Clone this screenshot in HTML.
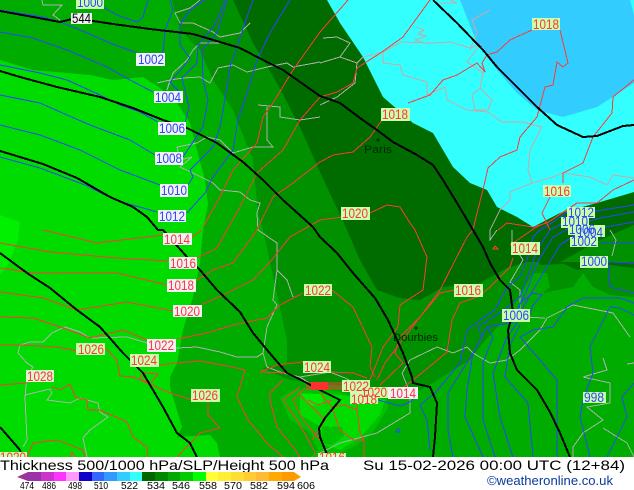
<!DOCTYPE html>
<html><head><meta charset="utf-8"><style>
html,body{margin:0;padding:0;background:#fff;width:634px;height:490px;overflow:hidden}
svg{display:block}
text{font-family:"Liberation Sans",sans-serif}
.b polyline{stroke:#000;stroke-width:2;fill:none}
.u polyline{stroke:#2a44ff;stroke-width:1;fill:none}
.r polyline{stroke:#ff3838;stroke-width:1;fill:none}
.g polyline{stroke:#b0b0b0;stroke-width:1;fill:none}
.p polyline{stroke:#c8a8a8;stroke-width:1;fill:none}
.t text{font-size:14px;text-anchor:middle}
</style></head><body>
<svg width="634" height="490" viewBox="0 0 634 490" xmlns="http://www.w3.org/2000/svg">
<defs><clipPath id="m"><rect width="634" height="457"/></clipPath></defs>
<rect width="634" height="490" fill="#fff"/>
<g clip-path="url(#m)">
<rect width="634" height="457" fill="#00dc00"/>
<polygon fill="#00f000" points="0,215 20,222 18,240 8,265 0,275"/>
<polygon fill="#00ac00" points="0,0 0,60 33,70 67,73 90,75 113,80 143,77 160,88 177,103 190,123 197,150 205,180 208,205 203,230 200,263 193,297 183,330 177,363 170,377 170,387 182,427 177,437 210,435 217,443 220,457 634,457 634,0"/>
<polygon fill="#009000" points="172,0 180,30 200,50 213,80 233,110 253,160 258,213 263,230 287,340 287,363 262,368 290,380 340,386 383,387 420,390 433,383 453,370 470,360 483,343 507,317 533,273 547,273 550,287 543,293 573,287 583,273 593,287 610,295 634,297 634,0"/>
<polygon fill="#006c00" points="233,0 253,43 277,83 300,127 320,172 347,230 360,260 377,290 400,298 420,300 443,287 463,285 480,283 507,268 527,262 560,262 577,270 590,268 610,265 634,268 634,0"/>
<polygon fill="#33ffff" points="327,0 340,23 363,57 383,97 413,123 433,133 453,167 470,183 487,190 497,207 517,217 533,227 560,213 597,203 634,192 634,0"/>
<polygon fill="#33ccff" points="460,0 477,43 497,70 517,93 537,110 563,117 597,107 634,83 634,15 630,0"/>
<polygon fill="#006c00" points="530,235 560,218 590,205 634,195 634,240 600,262 540,265"/>
<polygon fill="#009000" points="560,262 600,240 634,225 634,262 600,262"/>
<polygon fill="#00c000" points="280,398 293,390 317,388 340,392 357,398 387,398 388,408 373,432 357,445 337,455 317,457 310,457 318,450 310,432 290,420"/>
<polygon fill="#00dc00" points="300,393 340,395 385,400 380,415 360,438 340,450 325,445 318,425 300,415"/>
<polygon fill="#00c000" points="322,426 342,427 344,436 332,445 322,444"/>
<polygon fill="#00ee00" points="302,394 322,394 323,405 310,406"/>
<g shape-rendering="crispEdges">
<g class="p">
<polyline points="320,63 340,57 357,63 363,57 383,52 402,42 430,43 450,42 470,48 480,45 467,62 483,73 480,88 472,95 475,110 488,110 492,100 480,88"/>
<polyline points="383,52 383,63 400,65 403,75 427,82 427,95 445,87 447,100 467,110 488,112 502,122 523,122 542,127 530,150 528,170 532,183 553,177 563,173 590,177 607,185 613,175 634,178"/>
<polyline points="532,183 510,192 510,200 500,210 490,230"/>
<polyline points="490,10 472,20 477,33 470,50"/>
<polyline points="450,0 457,3 440,3"/>
<polyline points="416,27 424,30 418,34 426,36 415,40 428,44"/>
</g>
<g class="g">
<polyline points="42,0 43,5 62,5 53,15 60,20"/>
<polyline points="175,13 190,8 200,0"/>
<polyline points="175,13 180,23 193,23 213,32 220,37 240,33 250,23"/>
<polyline points="200,43 220,43"/>
<polyline points="157,83 170,80 167,90 173,73 187,60 193,50 200,43"/>
<polyline points="170,80 183,78 200,77 210,83 218,68 233,65 247,72 267,67 287,63 293,67 320,62"/>
<polyline points="258,105 280,107 280,117 300,120 320,117"/>
<polyline points="267,107 267,140 273,147 253,147 233,153 220,140 207,137 197,143 177,147 180,160 192,157 180,167 193,173 213,183 220,190 240,192 250,200 260,203 257,213 258,230 277,243 277,260 277,270 287,280 293,297"/>
<polyline points="277,270 273,300 277,305 267,327 263,353 257,357 237,357 220,352 197,347 177,348 147,343 127,337 90,338 80,332 65,327 52,333 43,342 30,342 20,345 18,353 27,363 33,367 27,377 25,397 27,440 23,447"/>
<polyline points="25,395 50,389 52,393 47,400 70,403 80,398 98,403 100,412 108,417 90,430 83,438 87,457"/>
<polyline points="263,353 267,367 283,373 300,377 312,385"/>
<polyline points="323,38 337,37 350,43 340,57 320,63"/>
<polyline points="357,63 355,83 337,97 320,105"/>
<polyline points="300,377 330,372 345,378 365,388"/>
<polyline points="410,360 437,347 453,353 467,347 473,353 490,363 507,360 520,350 540,330 547,318 573,305 613,313 630,337"/>
<polyline points="410,360 402,373 410,393 410,413 377,433 340,443 320,453"/>
<polyline points="603,358 607,370 583,377 610,383 610,403 587,407 603,420 583,433 573,447 573,457"/>
<polyline points="603,428 627,443 634,457"/>
<polyline points="627,364 634,363"/>
<polyline points="490,230 490,240 497,230"/>
<polyline points="512,230 512,243 523,260 510,282 520,290 520,317 545,318"/>
<polyline points="610,230 616,240 612,256"/>
</g>
<g class="u">
<polyline points="103,7 117,15 137,22 143,17 148,0"/>
<polyline points="0,10 43,17 60,22 80,30 110,43 137,53"/>
<polyline points="163,53 165,30 173,10 170,0"/>
<polyline points="0,32 33,38 67,50 107,67 130,80 153,92"/>
<polyline points="182,95 170,82 185,65 190,58 180,45 180,25 190,10 205,0"/>
<polyline points="0,65 40,73 67,80 100,95 120,105 140,112 158,122"/>
<polyline points="185,123 189,107 185,90 182,78 197,63 198,45 215,25 225,0"/>
<polyline points="0,95 40,103 67,115 90,125 130,140 155,155"/>
<polyline points="183,157 203,127 208,100 203,80 202,50 217,33 227,0"/>
<polyline points="0,125 40,135 80,150 120,170 160,185"/>
<polyline points="188,185 193,177 190,170 213,147 220,127 227,87 230,67 247,17 253,0"/>
<polyline points="0,157 40,168 85,185 115,200 157,212"/>
<polyline points="187,213 205,193 213,177 233,150 238,120 247,93 257,60 270,33 290,0"/>
<polyline points="378,400 400,406 408,403 415,398"/>
<polyline points="430,450 427,420 420,405 435,393 460,363 467,330 480,320 495,310 507,287 520,277 528,257 533,237 540,230 553,222 570,210"/>
<polyline points="453,457 448,430 448,393 473,353 482,337 478,327 500,313 520,297 530,270 537,250 550,230 565,222 590,212 634,205"/>
<polyline points="483,457 465,417 467,390 473,353 487,327 510,323 527,290 537,263 553,237 575,225 600,218 634,212"/>
<polyline points="495,457 483,420 483,363 493,337 487,327 497,325 515,322 530,295 545,270 560,245 575,235 600,228 634,222"/>
<polyline points="513,457 500,417 493,373 507,337 517,323 520,303 533,293 542,295 533,305 527,322"/>
<polyline points="533,457 528,403 505,377 510,345 520,325"/>
<polyline points="557,457 557,380 520,337 533,330 553,327 567,307 583,298 620,298 634,303"/>
<polyline points="590,457 580,417 583,400 593,373 590,347 610,307 620,308 634,315"/>
<polyline points="607,457 627,417 622,397 634,383"/>
<polyline points="608,262 610,287 634,293"/>
<polyline points="600,243 634,243"/>
<polyline points="608,262 634,263"/>
<polyline points="398,428 396,432 400,432 398,428"/>
</g>
<g class="r">
<polyline points="348,0 320,32 293,70 273,103 263,117 257,143 233,170 220,197 203,227"/>
<polyline points="430,0 403,37 382,52 357,68 353,83 337,92 320,97 300,120 283,150 257,173 240,207 227,230 217,248 197,258"/>
<polyline points="532,30 510,40 497,52 487,55 482,63 485,72 477,63 457,75 443,80 430,95 408,103"/>
<polyline points="382,120 370,137 353,152 333,155 320,162 293,183 273,197 263,217 257,230 233,263 213,270 197,280"/>
<polyline points="560,30 568,63 563,67 557,62 553,85 545,87 537,117 520,137 517,150 500,157 488,168 483,190 477,213 473,230 467,237 440,290 420,317 410,330 385,363 377,380"/>
<polyline points="634,80 613,97 612,113 593,137 583,163 563,173 563,183"/>
<polyline points="550,197 542,213 550,230"/>
<polyline points="634,180 613,190 597,203 577,203 547,223 533,227 507,223 498,230"/>
<polyline points="370,213 387,205 400,207 410,223 415,230 427,257 423,290 400,305 398,327 383,347 370,380"/>
<polyline points="203,304 223,295 253,280 270,262 290,237 320,220 342,217"/>
<polyline points="43,230 97,243 163,235"/>
<polyline points="192,237 202,230"/>
<polyline points="0,243 50,252 117,258 168,261"/>
<polyline points="197,258 217,248 227,230"/>
<polyline points="0,268 33,273 117,273 167,285"/>
<polyline points="0,292 43,298 77,310 127,302 173,311"/>
<polyline points="0,317 33,318 63,328 90,338 123,330 147,340"/>
<polyline points="177,339 207,333 233,325 267,318 280,305 303,293"/>
<polyline points="0,345 20,345 57,347 77,351"/>
<polyline points="105,348 117,360 120,376 133,377 147,383 170,393 192,400"/>
<polyline points="143,373 158,374 150,384 140,378 143,373"/>
<polyline points="159,365 177,363 200,361 233,367 245,370 237,397 248,420 267,443 283,457"/>
<polyline points="0,385 27,383"/>
<polyline points="52,387 60,390 70,384 75,397 87,400 88,410 100,410 127,422 133,437 147,447 148,457"/>
<polyline points="208,402 208,415 220,428 200,433 177,457"/>
<polyline points="27,457 33,443 57,440 83,450 85,457"/>
<polyline points="70,457 72,452 75,457"/>
<polyline points="283,380 270,393 270,400 277,427 293,447 300,457"/>
<polyline points="300,387 283,400 297,420 310,443 317,457"/>
<polyline points="305,388 293,400 303,420 320,440"/>
<polyline points="260,372 277,365 302,362 320,362"/>
<polyline points="260,372 287,373 307,383"/>
<polyline points="332,290 353,307 372,347 370,367 375,377"/>
<polyline points="330,372 353,373 367,378"/>
<polyline points="455,290 440,293 420,317 400,337 395,353 403,363 380,385"/>
<polyline points="483,293 490,287 510,267 513,258"/>
<polyline points="483,295 460,303 452,320 447,352 417,377 400,390"/>
<polyline points="495,246 498,249 493,249 495,246"/>
<polyline points="320,393 332,407 340,430 353,440 364,440 364,457"/>
<polyline points="357,404 357,410 360,433 364,440"/>
<polyline points="332,407 345,405 357,410"/>
<polyline points="308,400 318,405 332,400"/>
<polyline points="300,395 325,420 312,440"/>
<polyline points="510,245 535,228 547,222"/>
<polyline points="306,383 350,383"/>
<polyline points="306,385 346,385"/>
<polyline points="306,387 344,387"/>
<polyline points="306,389 342,389"/>
</g>
<g class="b">
<polyline points="0,11 33,17 60,22 72,19 93,21 113,24 150,29 193,34 220,42 240,48 263,60 283,70 320,96 340,103 360,118 377,130 393,142 417,155 433,165 443,180 457,203 473,230 483,247 490,263 500,280 510,290 513,313 508,330 510,353 517,370 537,390 550,412 560,433 570,457"/>
<polyline points="433,0 457,23 483,50 497,67 517,87 537,107 557,125 583,137 597,136 623,126 634,125"/>
<polyline points="0,71 20,77 57,87 100,97 133,108 163,120 187,128 217,143 243,162 263,180 283,200 313,227 320,237 337,253 353,273 375,298 388,320 403,353 412,377 413,383 430,387 437,403 435,437 433,457"/>
<polyline points="0,151 43,164 77,178 110,197 133,207 147,217 158,230 163,230 187,257 200,270 217,290 240,312 253,333 273,357 287,373 307,383 320,390 340,400 325,418 319,428 320,437 328,457"/>
<polyline points="0,253 27,273 50,288 77,310 100,327 123,353 143,373 163,407 177,433 190,443 197,457"/>
<polyline points="0,427 20,450 22,457"/>
</g>
</g>
<rect x="311" y="382" width="17" height="8" fill="#ff3030"/>
<circle cx="378" cy="140" r="1.500" fill="#003000"/>
<circle cx="416" cy="328" r="1.500" fill="#003000"/>
<text x="364" y="153" font-size="11" fill="#002800" textLength="28" lengthAdjust="spacingAndGlyphs">Paris</text>
<text x="393" y="341" font-size="11" fill="#002800" textLength="45" lengthAdjust="spacingAndGlyphs">Dourbies</text>

<g fill="#ccffaa">
<rect x="76" y="0" width="28" height="9"/>
<rect x="532" y="18" width="28" height="12"/>
<rect x="381" y="108" width="29" height="13"/>
<rect x="543" y="185" width="28" height="12"/>
<rect x="341" y="207" width="29" height="13"/>
<rect x="76" y="343" width="29" height="12"/>
<rect x="130" y="354" width="29" height="13"/>
<rect x="191" y="389" width="29" height="13"/>
<rect x="511" y="242" width="29" height="13"/>
<rect x="454" y="284" width="29" height="13"/>
<rect x="304" y="284" width="28" height="12"/>
<rect x="303" y="361" width="28" height="12"/>
<rect x="567" y="207" width="28" height="11"/>
<rect x="561" y="217" width="28" height="11"/>
<rect x="568" y="225" width="28" height="10"/>
<rect x="575" y="225" width="30" height="12"/>
<rect x="570" y="237" width="28" height="10"/>
<rect x="580" y="256" width="28" height="12"/>
<rect x="502" y="309" width="28" height="13"/>
<rect x="583" y="392" width="23" height="11"/>
<rect x="342" y="380" width="28" height="12"/>
<rect x="350" y="392" width="28" height="12"/>
<rect x="363" y="387" width="25" height="11"/>
<rect x="0" y="452" width="27" height="5"/>
<rect x="318" y="453" width="28" height="4"/>
</g>
<g fill="#f2f2f2">
<rect x="71" y="13" width="21" height="11"/>
<rect x="136" y="53" width="29" height="13"/>
<rect x="154" y="91" width="29" height="12"/>
<rect x="158" y="122" width="28" height="13"/>
<rect x="155" y="152" width="28" height="13"/>
<rect x="160" y="184" width="28" height="13"/>
<rect x="158" y="210" width="28" height="12"/>
<rect x="163" y="233" width="29" height="12"/>
<rect x="169" y="257" width="28" height="12"/>
<rect x="167" y="279" width="29" height="13"/>
<rect x="173" y="305" width="29" height="12"/>
<rect x="147" y="339" width="29" height="13"/>
<rect x="26" y="370" width="28" height="12" fill="#dff5cc"/>
<rect x="388" y="387" width="30" height="12"/>
</g>
<g class="t" fill="#2a44ff">
<text x="90" y="7" textLength="26" lengthAdjust="spacingAndGlyphs">1000</text>
<text x="151" y="64" textLength="26" lengthAdjust="spacingAndGlyphs">1002</text>
<text x="168" y="102" textLength="26" lengthAdjust="spacingAndGlyphs">1004</text>
<text x="172" y="133" textLength="26" lengthAdjust="spacingAndGlyphs">1006</text>
<text x="169" y="163" textLength="26" lengthAdjust="spacingAndGlyphs">1008</text>
<text x="174" y="195" textLength="26" lengthAdjust="spacingAndGlyphs">1010</text>
<text x="172" y="221" textLength="26" lengthAdjust="spacingAndGlyphs">1012</text>
<text x="581" y="217" textLength="26" lengthAdjust="spacingAndGlyphs">1012</text>
<text x="575" y="226" textLength="26" lengthAdjust="spacingAndGlyphs">1010</text>
<text x="582" y="234" textLength="26" lengthAdjust="spacingAndGlyphs">1006</text>
<text x="590" y="237" textLength="26" lengthAdjust="spacingAndGlyphs">1004</text>
<text x="584" y="246" textLength="26" lengthAdjust="spacingAndGlyphs">1002</text>
<text x="594" y="266" textLength="26" lengthAdjust="spacingAndGlyphs">1000</text>
<text x="516" y="320" textLength="26" lengthAdjust="spacingAndGlyphs">1006</text>
<text x="594" y="402" textLength="20" lengthAdjust="spacingAndGlyphs">998</text>
</g>
<text x="81.500" y="23" font-size="14" text-anchor="middle" fill="#000" textLength="19" lengthAdjust="spacingAndGlyphs">544</text>
<g class="t" fill="#ff3344">
<text x="546" y="29" textLength="26" lengthAdjust="spacingAndGlyphs">1018</text>
<text x="395" y="119" textLength="26" lengthAdjust="spacingAndGlyphs">1018</text>
<text x="557" y="196" textLength="26" lengthAdjust="spacingAndGlyphs">1016</text>
<text x="355" y="218" textLength="26" lengthAdjust="spacingAndGlyphs">1020</text>
<text x="177" y="244" textLength="26" lengthAdjust="spacingAndGlyphs">1014</text>
<text x="183" y="268" textLength="26" lengthAdjust="spacingAndGlyphs">1016</text>
<text x="181" y="290" textLength="26" lengthAdjust="spacingAndGlyphs">1018</text>
<text x="187" y="316" textLength="26" lengthAdjust="spacingAndGlyphs">1020</text>
<text x="525" y="253" textLength="26" lengthAdjust="spacingAndGlyphs">1014</text>
<text x="468" y="295" textLength="26" lengthAdjust="spacingAndGlyphs">1016</text>
<text x="318" y="295" textLength="26" lengthAdjust="spacingAndGlyphs">1022</text>
<text x="161" y="350" textLength="26" lengthAdjust="spacingAndGlyphs">1022</text>
<text x="91" y="354" textLength="26" lengthAdjust="spacingAndGlyphs">1026</text>
<text x="144" y="365" textLength="26" lengthAdjust="spacingAndGlyphs">1024</text>
<text x="317" y="372" textLength="26" lengthAdjust="spacingAndGlyphs">1024</text>
<text x="40" y="381" textLength="26" lengthAdjust="spacingAndGlyphs">1028</text>
<text x="205" y="400" textLength="26" lengthAdjust="spacingAndGlyphs">1026</text>
<text x="356" y="391" textLength="26" lengthAdjust="spacingAndGlyphs">1022</text>
<text x="364" y="404" textLength="26" lengthAdjust="spacingAndGlyphs">1018</text>
<text x="374" y="397" textLength="26" lengthAdjust="spacingAndGlyphs">1020</text>
<text x="403" y="398" textLength="26" lengthAdjust="spacingAndGlyphs">1014</text>
<text x="13" y="462" textLength="26" lengthAdjust="spacingAndGlyphs">1020</text>
<text x="332" y="462" textLength="26" lengthAdjust="spacingAndGlyphs">1016</text>
</g>
</g>
<text x="0" y="470" font-size="14" fill="#000" textLength="329" lengthAdjust="spacingAndGlyphs">Thickness 500/1000 hPa/SLP/Height 500 hPa</text>
<text x="363" y="470" font-size="14" fill="#000" textLength="262" lengthAdjust="spacingAndGlyphs">Su 15-02-2026 00:00 UTC (12+84)</text>
<text x="487" y="485" font-size="13" fill="#0a3a9a" textLength="126" lengthAdjust="spacingAndGlyphs">©weatheronline.co.uk</text>
<polygon points="17,477 28,472 28,481" fill="#993399"/>
<rect x="28" y="472" width="13" height="9" fill="#9933aa"/>
<rect x="41" y="472" width="13" height="9" fill="#cc33cc"/>
<rect x="54" y="472" width="12" height="9" fill="#ff33ff"/>
<rect x="66" y="472" width="13" height="9" fill="#ff99ff"/>
<rect x="79" y="472" width="13" height="9" fill="#1100cc"/>
<rect x="92" y="472" width="12" height="9" fill="#3366ff"/>
<rect x="104" y="472" width="13" height="9" fill="#3399ff"/>
<rect x="117" y="472" width="13" height="9" fill="#33ccff"/>
<rect x="130" y="472" width="12" height="9" fill="#33ffff"/>
<rect x="142" y="472" width="13" height="9" fill="#006600"/>
<rect x="155" y="472" width="13" height="9" fill="#008800"/>
<rect x="168" y="472" width="12" height="9" fill="#00aa00"/>
<rect x="180" y="472" width="13" height="9" fill="#00cc00"/>
<rect x="193" y="472" width="13" height="9" fill="#00ff00"/>
<rect x="206" y="472" width="12" height="9" fill="#ffff33"/>
<rect x="218" y="472" width="13" height="9" fill="#ffee33"/>
<rect x="231" y="472" width="13" height="9" fill="#ffdd33"/>
<rect x="244" y="472" width="12" height="9" fill="#ffcc33"/>
<rect x="256" y="472" width="13" height="9" fill="#ffbb33"/>
<rect x="269" y="472" width="13" height="9" fill="#ffaa00"/>
<rect x="282" y="472" width="12" height="9" fill="#ff9900"/>
<polygon points="294,472 301,477 294,481" fill="#ff9900"/>
<g font-size="10" fill="#000">
<text x="20" y="489" textLength="14" lengthAdjust="spacingAndGlyphs">474</text>
<text x="42" y="489" textLength="14" lengthAdjust="spacingAndGlyphs">486</text>
<text x="68" y="489" textLength="14" lengthAdjust="spacingAndGlyphs">498</text>
<text x="94" y="489" textLength="14" lengthAdjust="spacingAndGlyphs">510</text>
<text x="121" y="489" textLength="17" lengthAdjust="spacingAndGlyphs">522</text>
<text x="147" y="489" textLength="18" lengthAdjust="spacingAndGlyphs">534</text>
<text x="172" y="489" textLength="18" lengthAdjust="spacingAndGlyphs">546</text>
<text x="199" y="489" textLength="18" lengthAdjust="spacingAndGlyphs">558</text>
<text x="224" y="489" textLength="18" lengthAdjust="spacingAndGlyphs">570</text>
<text x="250" y="489" textLength="18" lengthAdjust="spacingAndGlyphs">582</text>
<text x="277" y="489" textLength="18" lengthAdjust="spacingAndGlyphs">594</text>
<text x="297" y="489" textLength="18" lengthAdjust="spacingAndGlyphs">606</text>
</g>
</svg>
</body></html>
